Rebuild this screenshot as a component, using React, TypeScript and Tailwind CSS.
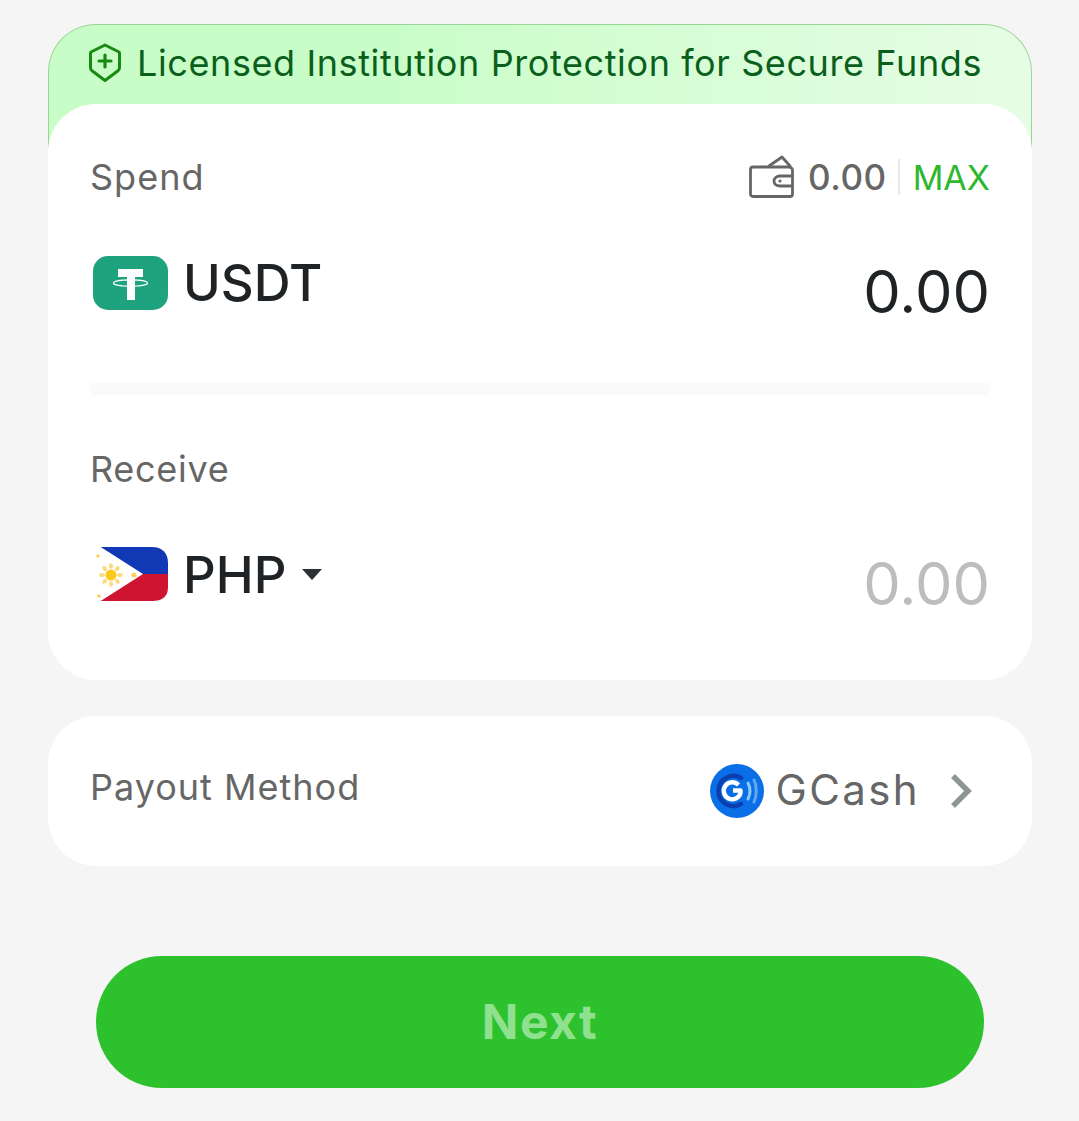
const sans = { fontFamily: 'Inter, sans-serif' };

function ShieldIcon() {
  return (
    <svg width="34" height="40" viewBox="0 0 34 40" fill="none" stroke="#188a12" strokeLinejoin="round">
      <path d="M17 2 L31 9 C31.5 9.3 31.5 9.5 31.5 10 V25 C31.5 26 31 27 30 27.8 L17 37.5 L4 27.8 C3 27 2.5 26 2.5 25 V10 C2.5 9.5 2.5 9.3 3 9 Z" strokeWidth="3" />
      <path d="M17 12 V24 M11 18 H23" strokeWidth="3.2" strokeLinecap="round" />
    </svg>
  );
}

function WalletIcon() {
  return (
    <svg width="46" height="44" viewBox="0 0 46 44" fill="none" stroke="#666" strokeWidth="2.8" strokeLinejoin="round">
      <path d="M4 12 H40 C42 12 43.5 13.5 43.5 15 V39 C43.5 40.5 42.5 41.5 41 41.5 H4 C2.5 41.5 1.5 40.5 1.5 39 V14.5 C1.5 13 2.5 12 4 12 Z" />
      <path d="M20 11 L33 2 L41 11" strokeLinecap="round" />
      <path d="M43.5 21 H31 C27.5 21 25 23.5 25 26 C25 29 27.5 31 31 31 H43.5" />
      <circle cx="31" cy="26" r="1.6" fill="#666" stroke="none" />
    </svg>
  );
}

function TetherLogo() {
  return (
    <svg width="75" height="54" viewBox="0 0 75 54">
      <rect width="75" height="54" rx="15" fill="#1fa37f" />
      <path d="M25 13 H50 V21 H42 V44 H34 V21 H25 Z" fill="#fff" />
      <ellipse cx="37.5" cy="27" rx="17" ry="3.2" fill="none" stroke="#fff" strokeWidth="1.2" />
    </svg>
  );
}

function PhilippinesFlag() {
  const rays = [0, 45, 90, 135, 180, 225, 270, 315];
  return (
    <svg width="76" height="56" viewBox="0 0 76 56">
      <defs>
        <clipPath id="flag-clip">
          <path d="M6 0 H60 C70 0 76 6 76 16 V40 C76 50 70 54 60 54 H6 Z" />
        </clipPath>
      </defs>
      <g clipPath="url(#flag-clip)">
        <rect width="76" height="27" fill="#1239b5" />
        <rect y="27" width="76" height="28" fill="#cf1431" />
        <path d="M4 -3 L51 27 L4 57 Z" fill="#fff" />
      </g>
      <circle cx="19" cy="28" r="5.5" fill="#fbc91a" />
      {rays.map((deg) => (
        <ellipse key={deg} cx="19" cy="19" rx="2" ry="2.8" fill="#fbdc7c" transform={`rotate(${deg} 19 28)`} />
      ))}
      <circle cx="42" cy="28" r="2.6" fill="#fbd25a" />
      <circle cx="6" cy="9" r="1.8" fill="#fbd25a" />
      <circle cx="7" cy="49" r="1.8" fill="#fbd25a" />
    </svg>
  );
}

function GcashLogo() {
  return (
    <svg width="54" height="54" viewBox="0 0 54 54" fill="none">
      <circle cx="27" cy="27" r="27" fill="#0a6ee6" />
      <path d="M31 14 A15 15 0 1 0 31 40" stroke="#0b3fb0" strokeWidth="4.5" strokeLinecap="round" />
      <path d="M28.5 21 A8.5 8.5 0 1 0 30.5 29 V26.5 H23" stroke="#fff" strokeWidth="4.4" strokeLinejoin="round" />
      <path d="M38 19 C40.5 24 40.5 30 38 35" stroke="#8cc8fa" strokeWidth="3" strokeLinecap="round" />
      <path d="M44 16 C47 22 47 32 44 38" stroke="#5fa8f5" strokeWidth="3" strokeLinecap="round" />
    </svg>
  );
}

export default function App() {
  return (
    <div className="min-h-[1121px] bg-[#f5f5f5] pl-12 pr-[47px] pt-6" style={sans}>
      <div className="h-[124px] rounded-t-[48px] border border-b-0 border-[#98d695] bg-gradient-to-r from-[#c9fdc8] from-35% to-[#e6fde5] pl-[39px] pt-[18px]">
        <div className="flex h-10 items-center gap-[15px]">
          <ShieldIcon />
          <span className="whitespace-nowrap text-[36px] tracking-[0.6px] text-[#0b5f1c]">Licensed Institution Protection for Secure Funds</span>
        </div>
      </div>

      <div className="relative -mt-11 h-[576px] rounded-[48px] bg-white px-[42px]">
        <div className="flex h-[125px] items-start justify-between pt-[46px]">
          <span className="text-[36px] tracking-[1px] text-[#666]">Spend</span>
          <div className="mt-px flex items-center">
            <WalletIcon />
            <span className="ml-[13px] text-[35px] font-medium tracking-[0.5px] text-[#666]">0.00</span>
            <div className="ml-[11px] mr-[13px] h-9 w-[2px] bg-[#e8e8e8]" />
            <span className="text-[34px] text-[#2fb82f]">MAX</span>
          </div>
        </div>
        <div className="flex items-center justify-between">
          <div className="flex items-center gap-[15px] pl-[3px]">
            <TetherLogo />
            <span className="mt-[2px] text-[51px] font-medium text-[#1f2326]">USDT</span>
          </div>
          <span className="mt-[18px] text-[59.5px] text-[#1f2326]">0.00</span>
        </div>
        <div className="mt-[47px] h-3 bg-[#fafafa]" />
        <div className="mt-[52px] text-[36px] leading-[44px] tracking-[0.7px] text-[#666]">Receive</div>
        <div className="mt-[30px] flex items-center justify-between">
          <div className="flex items-center pl-[2px]">
            <PhilippinesFlag />
            <span className="ml-[15px] text-[51px] font-medium text-[#1f2326]">PHP</span>
            <div className="ml-[16px] h-0 w-0 border-x-[10px] border-t-[11px] border-x-transparent border-t-[#2b2f33]" />
          </div>
          <span className="mt-[18px] text-[59.5px] text-[#bdbdbd]">0.00</span>
        </div>
      </div>

      <div className="mt-9 flex h-[150px] items-center justify-between rounded-[48px] bg-white pl-[42px] pr-[59px]">
        <span className="-mt-2 text-[36px] tracking-[1px] text-[#666]">Payout Method</span>
        <div className="flex items-center">
          <GcashLogo />
          <span className="-mt-[3px] ml-[11px] text-[42px] tracking-[2.4px] text-[#666]">GCash</span>
          <svg className="ml-[29px]" width="24" height="36" viewBox="0 0 24 36" fill="none" stroke="#8f9594" strokeWidth="5.5">
            <path d="M4 3 L19 18 L4 33" />
          </svg>
        </div>
      </div>

      <button className="mx-12 mt-[90px] flex h-[132px] w-[888px] items-center justify-center rounded-full bg-[#2dc22d] text-[48px] font-bold tracking-[1.5px] text-[#8fe08f]">
        Next
      </button>
    </div>
  );
}
